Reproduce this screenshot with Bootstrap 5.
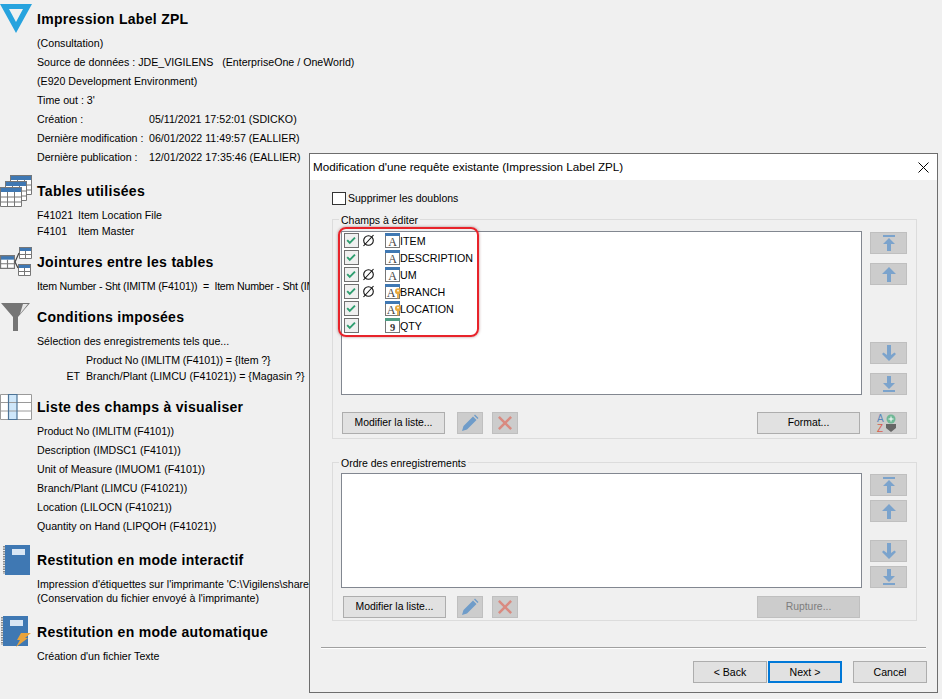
<!DOCTYPE html>
<html lang="fr"><head><meta charset="utf-8"><title>Impression Label ZPL</title>
<link rel="stylesheet" href="https://cdn.jsdelivr.net/npm/bootstrap@5.3.0/dist/css/bootstrap.min.css">
<style>
html,body{height:100%}
body{background:#f0f0f0;color:#000;font:10.65px/16px "Liberation Sans",Arial,sans-serif;overflow:hidden;position:relative}
.rpt{padding-top:7px;white-space:nowrap}
.rhead{height:24px;font-weight:700;font-size:14px;letter-spacing:.3px}
.ricon{width:37px;height:36px;flex:none;display:block}
.rbody{padding-left:37px}
.l19{line-height:19px}
.l14{line-height:14px}
.tight2{letter-spacing:-.21px}
.tight1{letter-spacing:-.1px}
.gap1{margin-top:1px}.gap3{margin-top:3px}.gap4{margin-top:4px}.gap5{margin-top:5px}.gap11{margin-top:11px}.gap12{margin-top:12px}.gap15{margin-top:15px}
.lab{display:inline-block;width:112px}
.code{display:inline-block;width:41px}
.cond{display:inline-block;width:49px;text-align:right;padding-right:6px}
.dlg{position:absolute;left:309px;top:153px;width:629px;height:540px;background:#f0f0f0;border:1px solid #6d6d6d;font-size:10.5px}
.dtitle{background:#fff;height:26px;padding-left:3px;font-size:11.65px}
.dbody{padding:0 20px 0 22px}
.chk-row{height:18px;margin-top:9px}
.chk0{width:14px;height:13px;border:1px solid #333;background:#fff;flex:none;margin-right:2px}
.grp{border:1px solid #dcdcdc;margin:0;padding:0 9px 0 8px;position:relative}
.grp1{height:220px;margin-top:12px}
.grp2{height:159px;margin-top:23px}
.gtitle{position:absolute;top:-7px;left:6px;background:#f0f0f0;padding:0 2px;line-height:15px}
.lbox{background:#fff;border:1px solid #828790;width:521px;flex:none}
.lbox1{height:164px;margin-top:11px;padding:0 0 0 2px;font-size:10.7px}
.lbox2{height:115px;margin-top:10px}
.fbtn{background:#e1e1e1;border:1px solid #adadad;border-radius:0;height:22px;padding:0;font-size:10.4px;color:#000;line-height:20px;font-family:inherit;width:103px}
.fbtn.dis{background:#ccc;border-color:#bfbfbf;color:#7d7d7d}
.ibtn{width:26px;display:flex;align-items:center;justify-content:center}
.abtn{width:37px;display:flex;align-items:center;justify-content:center}
.side{width:37px;margin-left:8px;flex:none}
.side1{margin-top:12px;height:163px}
.side2{margin-top:11px;height:114px}
.gapb{margin-bottom:9px}
.gapb2{margin-bottom:4px}
.row17{height:17px;width:136px}
.rowchk{width:15px;height:15px;background:#f0f0f0;border:1px solid #707070;flex:none;display:block}
.nul{width:13px;height:13px;margin-left:3px;flex:none;display:block}
.fld{width:15px;height:15px;margin-left:10px;flex:none;display:block;overflow:visible}
.hilite{position:absolute;left:28px;top:73px;width:141px;height:110px;border:2px solid #e8232a;border-radius:8px;box-shadow:0 0 3px rgba(90,0,0,.45)}
.sep{border-top:1px solid #a0a0a0;border-bottom:1px solid #fff;height:2px;margin:26px -9px 0 -11px}
.bar1{margin-top:17px}.bar2{margin-top:8px}
.m-l1{margin-left:1px}.m-l2{margin-left:2px}.m-l9{margin-left:9px}.m-l12{margin-left:12px}.m-l11{margin-left:11px}.m-l239{margin-left:239px}
.m-r2{margin-right:2px}
.wfoot{margin-top:12px;margin-right:-10px}
.wbtn{width:74px;font-size:10.6px}
.wbtn.def{border:2px solid #0078d7;line-height:18px}
.defs0{position:absolute}
</style></head><body>
<svg width="0" height="0" class="defs0">
<symbol id="a-top" viewBox="0 0 14 16"><path fill="#7ba3cc" d="M1 0h12v2H1zM7 3l6 6H9v7H5V9H1z"/></symbol>
<symbol id="a-up" viewBox="0 0 14 16"><path fill="#7ba3cc" d="M7 1l7 7H9v8H5V8H0z"/></symbol>
<symbol id="a-dn" viewBox="0 0 14 16"><path fill="#7ba3cc" d="M7 16L0 9l1.500-1.500L5 10V0h4v10l3.500-2.500L14 9z"/></symbol>
<symbol id="a-bot" viewBox="0 0 14 16"><path fill="#7ba3cc" d="M1 14h12v2H1zM7 13L1 7h4V0h4v7h4z"/></symbol>
<symbol id="pen" viewBox="0 0 18 18"><path fill="#6f9cc9" d="M1 17l1.500-5L12 2.500l3.500 3.500L6 15.500zM13 1.500l1-1 3.500 3.500-1 1z"/></symbol>
<symbol id="ex" viewBox="0 0 16 16"><path fill="#d98a80" d="M2 0l6 6 6-6 2 2-6 6 6 6-2 2-6-6-6 6-2-2 6-6-6-6z"/></symbol>
<symbol id="ck" viewBox="0 0 15 15"><path fill="none" stroke="#2f9e70" stroke-width="2.200" d="M2.500 7l3 3.200 6-6"/></symbol>
<symbol id="nl" viewBox="0 0 13 13"><circle cx="6.500" cy="6.500" r="4.800" fill="none" stroke="#111" stroke-width="1.100"/><path stroke="#111" stroke-width="1.100" d="M1.500 12L11.500 1"/></symbol>
<symbol id="key" viewBox="0 0 8 12"><circle cx="4" cy="3.500" r="3.500" fill="#e8a93c"/><path fill="#e8a93c" d="M3 5h2v6l-1 1-1-1z"/><circle cx="4" cy="2.800" r="1" fill="#fff"/></symbol>
<symbol id="tb" viewBox="0 0 22 20"><path fill="#fff" d="M0 0h22v20H0z"/><path fill="#3f78b3" d="M0 0h22v5H0z"/><path fill="none" stroke="#777" d="M.5.500h21v19H.5zM.5 10h21M.5 15h21M7.500 5v15M14.500 5v15"/></symbol>
<symbol id="tb2" viewBox="0 0 13 12" preserveAspectRatio="none"><path fill="#fff" d="M0 0h13v12H0z"/><path fill="#3f78b3" d="M0 0h13v4H0z"/><path fill="none" stroke="#777" d="M.5.500h12v11H.5zM.5 7.500h12M6.500 4v8"/></symbol>
</svg>

<div class="rpt">
 <div class="rhead d-flex align-items-center"><svg class="ricon" viewBox="0 0 37 36"><path fill="#27a3de" fill-rule="evenodd" d="M0 3h32L16 32zM9 8h14L16 21z"/></svg>Impression Label ZPL</div>
 <div class="rbody l19 gap3">
  <div>(Consultation)</div>
  <div>Source de données : JDE_VIGILENS &nbsp; (EnterpriseOne / OneWorld)</div>
  <div>(E920 Development Environment)</div>
  <div>Time out : 3'</div>
  <div><span class="lab">Création :</span>05/11/2021 17:52:01 (SDICKO)</div>
  <div><span class="lab">Dernière modification :</span>06/01/2022 11:49:57 (EALLIER)</div>
  <div><span class="lab">Dernière publication :</span>12/01/2022 17:35:46 (EALLIER)</div>
 </div>
 <div class="rhead d-flex align-items-center gap12"><svg class="ricon" viewBox="0 0 37 36"><use href="#tb" x="10" y="2" width="22" height="20"/><use href="#tb" x="5" y="8" width="22" height="20"/><use href="#tb" x="0" y="14" width="22" height="20"/></svg>Tables utilisées</div>
 <div class="rbody gap4">
  <div><span class="code">F41021</span>Item Location File</div>
  <div><span class="code">F4101</span>Item Master</div>
 </div>
 <div class="rhead d-flex align-items-center gap11"><svg class="ricon" viewBox="0 0 37 36"><use href="#tb2" x="19" y="3" width="13" height="12"/><use href="#tb2" x="18" y="20" width="13" height="12"/><use href="#tb2" x="0" y="11" width="15" height="14"/><path fill="none" stroke="#444" stroke-width="1.200" d="M19 9l-4 9 3 6"/></svg>Jointures entre les tables</div>
 <div class="rbody gap4"><div class="tight2">Item Number - Sht (IMITM (F4101)) &nbsp;=&nbsp; Item Number - Sht (IMITM (F41021))</div></div>
 <div class="rhead d-flex align-items-center gap11"><svg class="ricon" viewBox="0 0 37 36"><path fill="#757575" d="M1 4h29L18 18v14h-5V18z"/><path fill="#e6e6e6" d="M23 5h5l-8 10z"/></svg>Conditions imposées</div>
 <div class="rbody gap3">
  <div class="l19">Sélection des enregistrements tels que...</div>
  <div class="gap1 tight1"><span class="cond"></span>Product No (IMLITM (F4101)) = {Item ?}</div>
  <div><span class="cond">ET</span>Branch/Plant (LIMCU (F41021)) = {Magasin ?}</div>
 </div>
 <div class="rhead d-flex align-items-center gap11"><svg class="ricon" viewBox="0 0 37 36"><path fill="#fff" d="M0 5.500h32v25H0z"/><path fill="#cfe7fa" d="M8 5.500h9v25H8z"/><path fill="none" stroke="#9a9a9a" d="M.5 5.500h31v25H.5zM.5 13.500h31M.5 22h31"/><path fill="none" stroke="#4d7396" stroke-width="1.200" d="M8.500 5.500h8.500v25H8.500z"/></svg>Liste des champs à visualiser</div>
 <div class="rbody l19 gap3">
  <div class="tight1">Product No (IMLITM (F4101))</div>
  <div>Description (IMDSC1 (F4101))</div>
  <div>Unit of Measure (IMUOM1 (F4101))</div>
  <div>Branch/Plant (LIMCU (F41021))</div>
  <div>Location (LILOCN (F41021))</div>
  <div>Quantity on Hand (LIPQOH (F41021))</div>
 </div>
 <div class="rhead d-flex align-items-center gap12"><svg class="ricon" viewBox="0 0 37 36"><path fill="#3f78b3" d="M5 3h25v30H5z"/><path fill="#d9e6f4" d="M12 7h13v6H12z"/><path stroke="#8c8c8c" stroke-width="2" stroke-dasharray="1.500 1" d="M4 4v28"/></svg>Restitution en mode interactif</div>
 <div class="rbody gap5 l14">
  <div>Impression d'étiquettes sur l'imprimante 'C:\Vigilens\share\Label.zpl'</div>
  <div>(Conservation du fichier envoyé à l'imprimante)</div>
 </div>
 <div class="rhead d-flex align-items-center gap15"><svg class="ricon" viewBox="0 0 37 36"><path fill="#3f78b3" d="M3 2h25v30H3z"/><path fill="#d9e6f4" d="M10 6h13v6H10z"/><path stroke="#8c8c8c" stroke-width="2" stroke-dasharray="1.500 1" d="M2 3v28"/><path fill="#e8a33c" d="M21 19h10l-6 5h3L16 33l4-7h-3z"/></svg>Restitution en mode automatique</div>
 <div class="rbody gap4"><div>Création d'un fichier Texte</div></div>
</div>

<div class="dlg">
 <div class="dtitle d-flex align-items-center justify-content-between">
  <span>Modification d'une requête existante (Impression Label ZPL)</span>
  <svg class="me-2" width="11" height="11" viewBox="0 0 11 11"><path stroke="#000" fill="none" d="M.5.500l10 10M10.500.500l-10 10"/></svg>
 </div>
 <div class="dbody">
  <div class="d-flex align-items-center chk-row"><span class="chk0"></span>Supprimer les doublons</div>
  <fieldset class="grp grp1">
   <div class="gtitle">Champs à éditer</div>
   <div class="d-flex">
    <div class="lbox lbox1">
     <div class="row17 d-flex align-items-center"><svg class="rowchk"><use href="#ck"/></svg><svg class="nul"><use href="#nl"/></svg><svg class="fld" viewBox="0 0 15 15"><rect x=".5" y=".5" width="14" height="14" fill="#fff" stroke="#777"/><rect width="15" height="3" fill="#3f78b3"/><text x="7.500" y="13" text-anchor="middle" font-family="Liberation Serif" font-size="12" fill="#444">A</text></svg>ITEM</div>
     <div class="row17 d-flex align-items-center"><svg class="rowchk"><use href="#ck"/></svg><span class="nul"></span><svg class="fld" viewBox="0 0 15 15"><rect x=".5" y=".5" width="14" height="14" fill="#fff" stroke="#777"/><rect width="15" height="3" fill="#3f78b3"/><text x="7.500" y="13" text-anchor="middle" font-family="Liberation Serif" font-size="12" fill="#444">A</text></svg>DESCRIPTION</div>
     <div class="row17 d-flex align-items-center"><svg class="rowchk"><use href="#ck"/></svg><svg class="nul"><use href="#nl"/></svg><svg class="fld" viewBox="0 0 15 15"><rect x=".5" y=".5" width="14" height="14" fill="#fff" stroke="#777"/><rect width="15" height="3" fill="#3f78b3"/><text x="7.500" y="13" text-anchor="middle" font-family="Liberation Serif" font-size="12" fill="#444">A</text></svg>UM</div>
     <div class="row17 d-flex align-items-center"><svg class="rowchk"><use href="#ck"/></svg><svg class="nul"><use href="#nl"/></svg><svg class="fld" viewBox="0 0 15 15"><rect x=".5" y=".5" width="14" height="14" fill="#fff" stroke="#777"/><rect width="15" height="3" fill="#3f78b3"/><text x="6" y="13" text-anchor="middle" font-family="Liberation Serif" font-size="12" fill="#444">A</text><use href="#key" x="9.500" y="4" width="7" height="11"/></svg>BRANCH</div>
     <div class="row17 d-flex align-items-center"><svg class="rowchk"><use href="#ck"/></svg><span class="nul"></span><svg class="fld" viewBox="0 0 15 15"><rect x=".5" y=".5" width="14" height="14" fill="#fff" stroke="#777"/><rect width="15" height="3" fill="#3f78b3"/><text x="6" y="13" text-anchor="middle" font-family="Liberation Serif" font-size="12" fill="#444">A</text><use href="#key" x="9.500" y="4" width="7" height="11"/></svg>LOCATION</div>
     <div class="row17 d-flex align-items-center"><svg class="rowchk"><use href="#ck"/></svg><span class="nul"></span><svg class="fld" viewBox="0 0 15 15"><rect x=".5" y=".5" width="14" height="14" fill="#fff" stroke="#777"/><rect width="15" height="3" fill="#4f9e83"/><text x="7.500" y="13" text-anchor="middle" font-family="Liberation Serif" font-size="10.500" font-weight="700" fill="#333">9</text></svg>QTY</div>
    </div>
    <div class="side side1 d-flex flex-column">
     <button class="fbtn dis abtn gapb" type="button" aria-label="Haut"><svg width="14" height="16"><use href="#a-top"/></svg></button>
     <button class="fbtn dis abtn" type="button" aria-label="Monter"><svg width="14" height="16"><use href="#a-up"/></svg></button>
     <button class="fbtn dis abtn mt-auto gapb" type="button" aria-label="Descendre"><svg width="14" height="16"><use href="#a-dn"/></svg></button>
     <button class="fbtn dis abtn" type="button" aria-label="Bas"><svg width="14" height="16"><use href="#a-bot"/></svg></button>
    </div>
   </div>
   <div class="d-flex bar1">
    <button class="fbtn m-l1" type="button">Modifier la liste...</button>
    <button class="fbtn dis ibtn m-l12" type="button" aria-label="Editer"><svg width="18" height="18"><use href="#pen"/></svg></button>
    <button class="fbtn dis ibtn m-l9" type="button" aria-label="Supprimer"><svg width="14" height="14"><use href="#ex"/></svg></button>
    <button class="fbtn ms-auto m-r2" type="button">Format...</button>
    <button class="fbtn dis abtn side" type="button" aria-label="Tri"><svg width="26" height="20" viewBox="0 0 26 20"><text x="1" y="9" font-family="Liberation Sans" font-size="10" fill="#5b87b8">A</text><text x="1" y="19" font-family="Liberation Sans" font-size="10" fill="#d9604c">Z</text><circle cx="15" cy="6" r="4.500" fill="#6fb896"/><path stroke="#fff" d="M15 3.500v5M12.500 6h5"/><path fill="#666" d="M10 11h10v4l-5 4-5-4z"/></svg></button>
   </div>
  </fieldset>
  <fieldset class="grp grp2">
   <div class="gtitle">Ordre des enregistrements</div>
   <div class="d-flex">
    <div class="lbox lbox2"></div>
    <div class="side side2 d-flex flex-column">
     <button class="fbtn dis abtn gapb2" type="button" aria-label="Haut"><svg width="14" height="16"><use href="#a-top"/></svg></button>
     <button class="fbtn dis abtn" type="button" aria-label="Monter"><svg width="14" height="16"><use href="#a-up"/></svg></button>
     <button class="fbtn dis abtn mt-auto gapb2" type="button" aria-label="Descendre"><svg width="14" height="16"><use href="#a-dn"/></svg></button>
     <button class="fbtn dis abtn" type="button" aria-label="Bas"><svg width="14" height="16"><use href="#a-bot"/></svg></button>
    </div>
   </div>
   <div class="d-flex bar2">
    <button class="fbtn m-l2" type="button">Modifier la liste...</button>
    <button class="fbtn dis ibtn m-l11" type="button" aria-label="Editer"><svg width="18" height="18"><use href="#pen"/></svg></button>
    <button class="fbtn dis ibtn m-l9" type="button" aria-label="Supprimer"><svg width="14" height="14"><use href="#ex"/></svg></button>
    <button class="fbtn dis m-l239" type="button">Rupture...</button>
   </div>
  </fieldset>
  <div class="sep"></div>
  <div class="d-flex justify-content-end wfoot">
   <button class="fbtn wbtn" type="button">&lt; Back</button>
   <button class="fbtn wbtn def m-l1" type="button">Next &gt;</button>
   <button class="fbtn wbtn m-l11" type="button">Cancel</button>
  </div>
 </div>
 <div class="hilite"></div>
</div>
</body></html>
